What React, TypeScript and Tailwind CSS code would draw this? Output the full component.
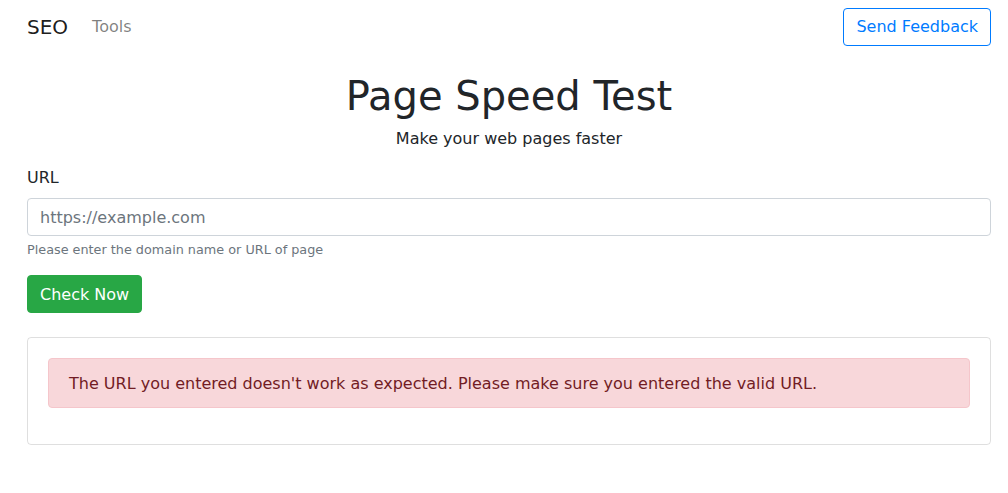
export default function App() {
  return (
    <div className="min-h-screen bg-white text-[#212529] text-base leading-normal font-['DejaVu_Sans',sans-serif]">
      <nav className="flex items-center justify-between pl-[27px] pr-[17px] py-[7px]">
        <div className="flex items-center">
          <a className="text-[20px] leading-[30px] text-black/90 mr-4">SEO</a>
          <a className="px-2 py-2 text-black/50">Tools</a>
        </div>
        <button className="h-[38px] px-3 border border-[#007bff] rounded text-[#007bff] leading-6">
          Send Feedback
        </button>
      </nav>

      <main className="pl-[27px] pr-[17px] pt-[18px]">
        <div className="text-center">
          <h1 className="text-[40px] leading-[48px] font-normal mb-[7px]">Page Speed Test</h1>
          <p className="mb-[15px]">Make your web pages faster</p>
        </div>

        <div className="mb-4">
          <label className="block mb-2">URL</label>
          <input
            className="block w-full h-[38px] px-3 pt-px border border-[#ced4da] rounded text-[#495057] placeholder:text-[#6c757d] outline-none"
            placeholder="https://example.com"
          />
          <small className="block mt-1 text-[12.8px] leading-[19px] text-[#6c757d]">
            Please enter the domain name or URL of page
          </small>
        </div>

        <button className="h-[38px] px-3 pt-px rounded bg-[#28a745] border border-[#28a745] text-white">
          Check Now
        </button>

        <div className="mt-6 border border-black/[0.125] rounded p-5">
          <div className="mb-4 px-5 pt-[13px] pb-[11px] bg-[#f8d7da] border border-[#f5c6cb] rounded text-[#721c24]">
            The URL you entered doesn't work as expected. Please make sure you entered the valid URL.
          </div>
        </div>
      </main>
    </div>
  );
}
